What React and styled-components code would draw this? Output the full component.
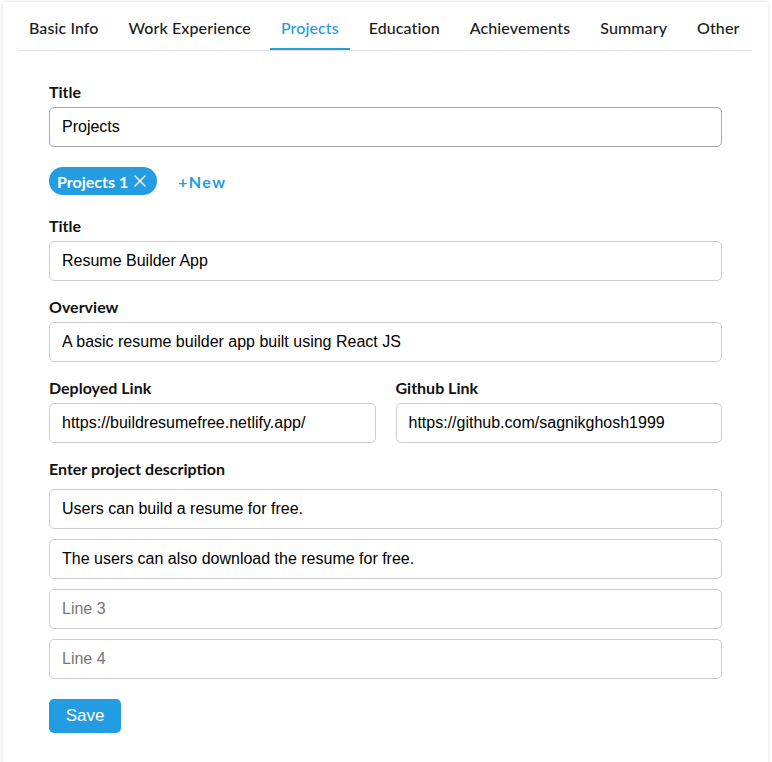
import React, { useState } from "react";
import styled, { createGlobalStyle } from "styled-components";

const Global = createGlobalStyle`
  html, body { margin: 0; padding: 0; background: #fff; }
  body { font-family: "Lato", "Noto Sans", sans-serif; }
  * { box-sizing: border-box; }
`;

const BLUE = "#239ce2";

const Card = styled.div`
  margin: 2px 4px 0 3px;
  min-height: 790px;
  background: #fff;
  box-shadow: 0 0 4px rgba(0, 0, 0, 0.14);
  padding: 0 16px 0 15px;
`;

const TabBar = styled.div`
  display: flex;
  gap: 8px;
  border-bottom: 1px solid #e3e3e3;
  height: 49px;
`;

const Tab = styled.div`
  padding: 5px 11px 0;
  display: flex;
  align-items: center;
  font-size: 16px;
  font-weight: 500;
  letter-spacing: 0.1px;
  color: ${(p) => (p.$active ? BLUE : "#1a1a1a")};
  border-bottom: 2px solid ${(p) => (p.$active ? BLUE : "transparent")};
  cursor: pointer;
  white-space: nowrap;
`;

const Form = styled.div`
  padding: 31px 30px 40px 31px;
  display: flex;
  flex-direction: column;
`;

const Field = styled.div`
  display: flex;
  flex-direction: column;
  flex: 1;
  margin-bottom: ${(p) => p.$mb ?? 16}px;
`;

const Label = styled.label`
  font-size: 16px;
  font-weight: 700;
  color: #111;
  line-height: 20px;
  margin-bottom: ${(p) => p.$mb ?? 5}px;
`;

const Input = styled.input`
  height: 40px;
  width: 100%;
  border: 1px solid ${(p) => (p.$dark ? "#a9a9a9" : "#cdcdcd")};
  border-radius: 5px;
  padding: 0 12px;
  font-family: "Liberation Sans", Arial, sans-serif;
  font-size: 16px;
  color: #000;
  outline: none;
  margin-bottom: ${(p) => p.$mb ?? 0}px;
  &::placeholder { color: #777; }
`;

const Row = styled.div`
  display: flex;
  gap: 20px;
`;

const ChipRow = styled.div`
  display: flex;
  align-items: center;
  gap: 21px;
  margin: 20px 0 21px;
`;

const Chip = styled.div`
  height: 28px;
  border-radius: 14px;
  background: ${BLUE};
  color: #fff;
  display: flex;
  align-items: center;
  gap: 6px;
  padding: 0 11px 0 8px;
  font-size: 16px;
  font-weight: 700;
`;

const NewBtn = styled.div`
  color: ${BLUE};
  font-size: 16px;
  font-weight: 700;
  letter-spacing: 1.4px;
  cursor: pointer;
`;

const SaveButton = styled.button`
  align-self: flex-start;
  margin-top: 20px;
  height: 34px;
  width: 72px;
  border: none;
  border-radius: 5px;
  background: ${BLUE};
  color: #fff;
  font-family: "Liberation Sans", Arial, sans-serif;
  font-size: 17px;
  cursor: pointer;
`;

const tabs = ["Basic Info", "Work Experience", "Projects", "Education", "Achievements", "Summary", "Other"];

export default function App() {
  const [active] = useState("Projects");
  return (
    <>
      <Global />
      <Card>
        <TabBar>
          {tabs.map((t) => (
            <Tab key={t} $active={t === active}>{t}</Tab>
          ))}
        </TabBar>
        <Form>
          <Field $mb={0}>
            <Label>Title</Label>
            <Input $dark defaultValue="Projects" />
          </Field>
          <ChipRow>
            <Chip>
              Projects 1
              <svg width="12" height="12" viewBox="0 0 12 12" fill="none" stroke="#fff" strokeWidth="1.4" strokeLinecap="round">
                <path d="M1 1 L11 11 M11 1 L1 11" />
              </svg>
            </Chip>
            <NewBtn>+New</NewBtn>
          </ChipRow>
          <Field>
            <Label>Title</Label>
            <Input defaultValue="Resume Builder App" />
          </Field>
          <Field>
            <Label>Overview</Label>
            <Input defaultValue="A basic resume builder app built using React JS" />
          </Field>
          <Row>
            <Field>
              <Label>Deployed Link</Label>
              <Input defaultValue="https://buildresumefree.netlify.app/" />
            </Field>
            <Field>
              <Label>Github Link</Label>
              <Input defaultValue="https://github.com/sagnikghosh1999" />
            </Field>
          </Row>
          <Field $mb={0}>
            <Label $mb={10}>Enter project description</Label>
            <Input $mb={10} defaultValue="Users can build a resume for free." />
            <Input $mb={10} defaultValue="The users can also download the resume for free." />
            <Input $mb={10} placeholder="Line 3" />
            <Input placeholder="Line 4" />
          </Field>
          <SaveButton>Save</SaveButton>
        </Form>
      </Card>
    </>
  );
}
